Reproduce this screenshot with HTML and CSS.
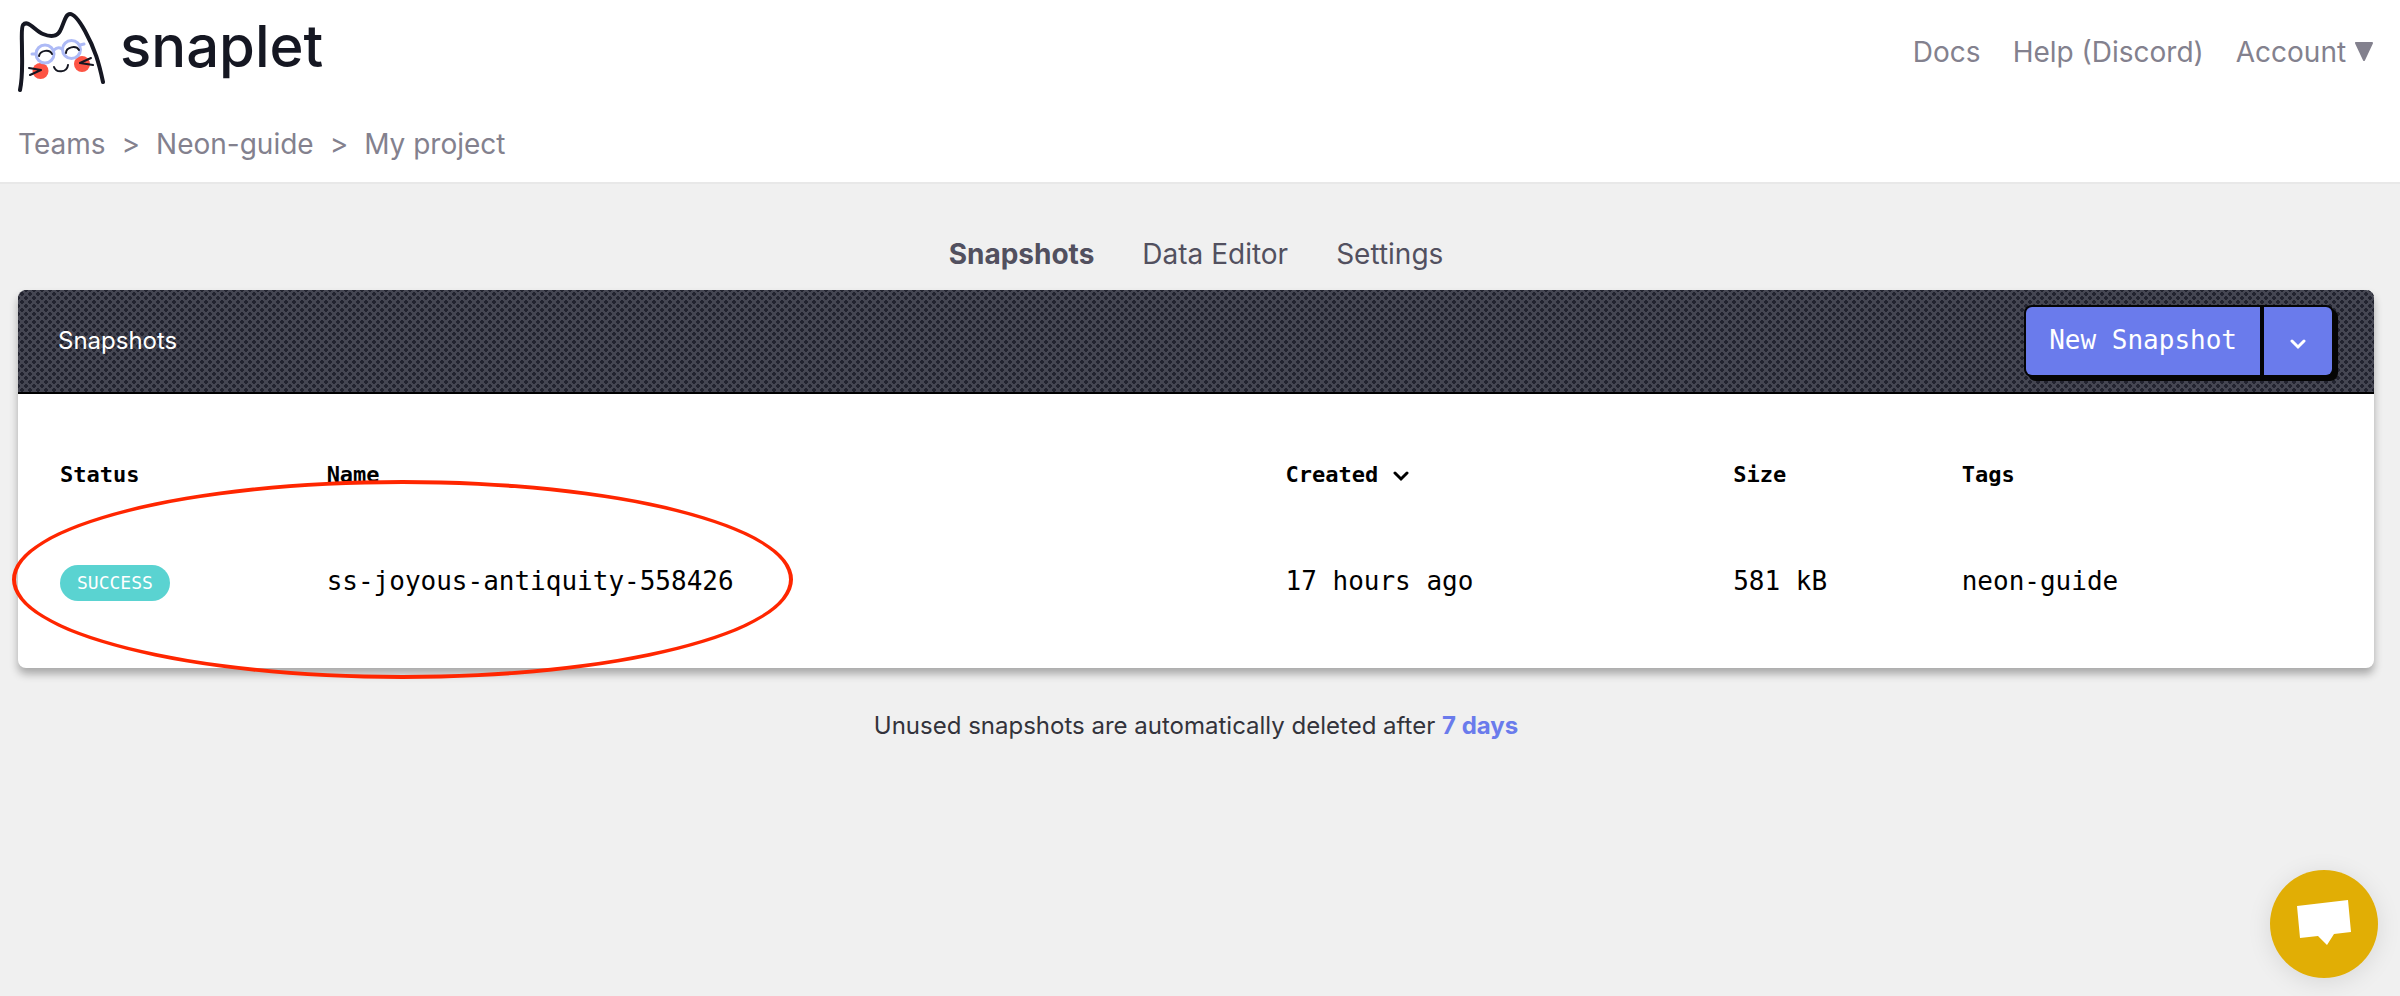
FILE: index.html
```html
<!DOCTYPE html>
<html lang="en">
<head>
    <meta charset="UTF-8">
    <meta name="viewport" content="width=device-width, initial-scale=1.0">
    <title>Snaplet - Snapshots</title>
    <link rel="stylesheet" href="styles.css">
</head>
<body>
    <header>
        <div class="topbar">
            <a href="#" class="logo">
                <svg width="90" height="84" viewBox="18 10 90 84" fill="none" stroke-linecap="round" stroke-linejoin="round">
                    <circle cx="40.500" cy="71" r="8" fill="#fd5444"/>
                    <circle cx="82" cy="64" r="8" fill="#fd5444"/>
                    <path d="M20 90C23 76 22 62 22 50C22 38 21 28 23 25C28 19 35 31 43 34C50 37 57 37 60 31C64 24 65 14 70 14C74 14 80 22 85 31C95 49 99 63 103 82" stroke="#151722" stroke-width="4"/>
                    <g stroke="#adbaf6" stroke-width="3">
                        <circle cx="45" cy="54" r="9"/>
                        <circle cx="71.500" cy="49.500" r="9"/>
                        <path d="M54 50C56 48 59 47 62 49M32 54H36M80 45L84 44"/>
                    </g>
                    <g stroke="#151722" stroke-width="2">
                        <path d="M39 56C40 50 50 49 52 54M66 53C66 47 76 45 79 50M54 67C56 73 67 73 68 65"/>
                        <path d="M29 68L41 70L30 75M91 58L80 63L93 65"/>
                    </g>
                </svg>
                <span>snaplet</span>
            </a>
            <nav>
                <ul>
                    <li><a href="#">Docs</a></li>
                    <li><a href="#">Help (Discord)</a></li>
                    <li>
                        <a href="#">Account
                            <svg width="20" height="20" viewBox="0 0 20 20"><path d="M2 1H18L10 18Z" fill="#83818e" stroke="#83818e" stroke-width="2" stroke-linejoin="round"/></svg>
                        </a>
                    </li>
                </ul>
            </nav>
        </div>
        <div class="breadcrumb">
            <a href="#">Teams</a>
            <span>&gt;</span>
            <a href="#">Neon-guide</a>
            <span>&gt;</span>
            <a href="#">My project</a>
        </div>
    </header>

    <main>
        <div class="tabs">
            <a href="#" class="active">Snapshots</a>
            <a href="#">Data Editor</a>
            <a href="#">Settings</a>
        </div>

        <div class="card">
            <div class="card-header">
                <h1>Snapshots</h1>
                <div class="button-group">
                    <button type="button" class="new-button">New Snapshot</button>
                    <button type="button" class="more-button" aria-label="More options">
                        <svg width="16" height="12" viewBox="0 0 16 12"><path d="M2 3L8 9L14 3" fill="none" stroke="#fff" stroke-width="3" stroke-linecap="round"/></svg>
                    </button>
                </div>
            </div>
            <table>
                <thead>
                    <tr>
                        <th class="col-status">Status</th>
                        <th class="col-name">Name</th>
                        <th class="col-created">Created
                            <svg width="16" height="12" viewBox="0 0 16 12"><path d="M2 3L8 9L14 3" fill="none" stroke="#000" stroke-width="3" stroke-linecap="round"/></svg>
                        </th>
                        <th class="col-size">Size</th>
                        <th>Tags</th>
                    </tr>
                </thead>
                <tbody>
                    <tr>
                        <td><span class="badge">SUCCESS</span></td>
                        <td>ss-joyous-antiquity-558426</td>
                        <td>17 hours ago</td>
                        <td>581 kB</td>
                        <td>neon-guide</td>
                    </tr>
                </tbody>
            </table>
            <div class="highlight"></div>
        </div>

        <p class="note">Unused snapshots are automatically deleted after <a href="#">7 days</a></p>
    </main>

    <button type="button" class="chat" aria-label="Open chat">
        <svg width="54" height="46" viewBox="0 0 54 46"><path d="M0 6L51 0L54 32L37 34L30 45L21 36L3 38Z" fill="#fff"/></svg>
    </button>
</body>
</html>
```
FILE: styles.css
```css
* {
    margin: 0;
    padding: 0;
    box-sizing: border-box;
}
body {
    font-family: Inter, sans-serif;
    font-size: 28px;
    line-height: 36px;
    min-height: 100vh;
    background-color: #f0f0f0;
}
a {
    color: inherit;
    text-decoration: none;
}
button {
    border: none;
    cursor: pointer;
}

/* header */
header {
    padding: 10px 26px 20px 18px;
    background-color: #fff;
    border-bottom: 2px solid #e8e8e8;
    color: #83818e;
}
.topbar {
    display: flex;
    justify-content: space-between;
    align-items: center;
    height: 84px;
}
.logo {
    display: flex;
    align-items: center;
    gap: 12px;
    color: #151722;
}
.logo span {
    font-size: 58px;
    font-weight: 500;
    line-height: 64px;
    padding-bottom: 12px;
}
nav ul {
    display: flex;
    gap: 32px;
    list-style: none;
}
.breadcrumb {
    display: flex;
    gap: 16px;
    margin-top: 32px;
}

/* tabs */
main {
    padding: 52px 26px 0 18px;
}
.tabs {
    display: flex;
    justify-content: center;
    gap: 48px;
    color: #52505f;
}
.tabs .active {
    font-weight: 700;
}

/* snapshots card */
.card {
    position: relative;
    margin-top: 18px;
    padding-bottom: 34px;
    background-color: #fff;
    border-radius: 8px;
    box-shadow: 0 6px 8px rgba(0, 0, 0, 0.3);
}
.card-header {
    display: flex;
    justify-content: space-between;
    align-items: center;
    height: 104px;
    padding: 0 40px;
    background-color: #454652;
    background-image: radial-gradient(#22232f 2px, transparent 2px), radial-gradient(#22232f 2px, transparent 2px);
    background-size: 8px 8px;
    background-position: 0 0, 4px 4px;
    border-bottom: 2px solid #000;
    border-radius: 8px 8px 0 0;
    color: #fff;
}
h1 {
    font-size: 24px;
    font-weight: 400;
}
.button-group {
    display: flex;
    gap: 4px;
    background-color: #050505;
    border: 2px solid #050505;
    border-radius: 8px;
    box-shadow: 4px 4px 0 #050505;
}
.button-group button {
    height: 68px;
    background-color: #6a7bec;
    color: #fff;
    font-family: "DejaVu Sans Mono", monospace;
    font-size: 26px;
}
.new-button {
    padding: 0 23px 2px;
    border-radius: 6px 0 0 6px;
}
.more-button {
    width: 68px;
    border-radius: 0 6px 6px 0;
}
table {
    width: 100%;
    table-layout: fixed;
    border-collapse: collapse;
    margin-top: 28px;
    font-family: "DejaVu Sans Mono", monospace;
    font-size: 26px;
}
th, td {
    height: 106px;
    text-align: left;
    font-weight: 400;
}
th {
    font-size: 22px;
    font-weight: 700;
}
th svg {
    margin-left: 2px;
}
th:first-child, td:first-child {
    padding-left: 42px;
}
.col-status {
    width: 13.1%;
}
.col-name {
    width: 40.7%;
}
.col-created {
    width: 19%;
}
.col-size {
    width: 9.7%;
}
.badge {
    display: inline-block;
    margin-top: 2px;
    padding: 0 17px;
    border-radius: 18px;
    background-color: #5ad3d1;
    color: #fff;
    font-size: 18px;
}

/* red ring round the new snapshot */
.highlight {
    position: absolute;
    left: -6px;
    top: 190px;
    width: 781px;
    height: 199px;
    border: 4px solid #ff2600;
    border-radius: 50%;
    pointer-events: none;
}
.note {
    margin-top: 40px;
    text-align: center;
    font-size: 24px;
    color: #33333b;
}
.note a {
    color: #6a7bec;
    font-weight: 700;
}

/* chat */
.chat {
    position: fixed;
    right: 22px;
    bottom: 18px;
    width: 108px;
    height: 108px;
    border-radius: 50%;
    background-color: #e1ae05;
    box-shadow: 0 4px 24px rgba(0, 0, 0, 0.1);
}
```
